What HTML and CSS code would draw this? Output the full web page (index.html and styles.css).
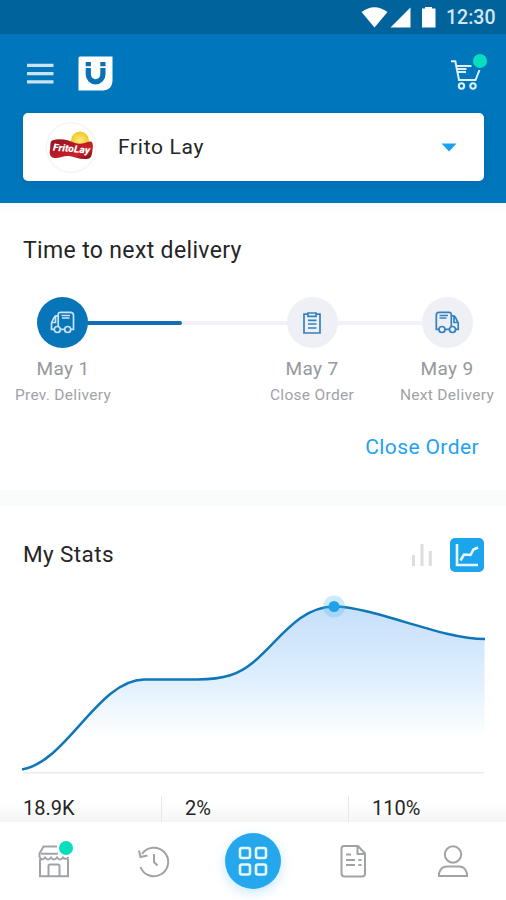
FILE: index.html
```html
<!DOCTYPE html>
<html lang="en">
<head>
<meta charset="utf-8">
<title>Delivery dashboard</title>
<link rel="stylesheet" href="styles.css">
</head>
<body>
<div class="app">
  <div class="statusbar">
    <svg class="status-icons" width="76" height="22" viewBox="361 6 76 22">
      <path d="M361.500 12 Q374.500 2.500 387.500 12 L374.500 27.500Z"/>
      <path d="M410.500 7.500V27.500H390.500Z"/>
      <path d="M425 7h7v1.500h3.500v19h-13.500v-19h3Z"/>
    </svg>
    <span class="clock">12:30</span>
  </div>
  <header class="header">
    <div class="toolbar">
      <svg class="menu" width="27" height="22" viewBox="0 0 27 22"><path d="M0 2.300h26.500M0 10.600h26.500M0 18.800h26.500"/></svg>
      <svg class="logo" width="35" height="35" viewBox="0 0 35 35">
        <path class="logo-bg" d="M2 0.500H34.500V25Q34 34 25 34.500H.500V2Q.500.500 2 .500Z"/>
        <path class="logo-u" d="M10.300 12V18.500A7.300 7.300 0 0 0 24.900 18.500V12M10.300 6v4.300M24.900 6v4.300"/>
      </svg>
      <div class="cart">
        <svg width="40" height="40" viewBox="448 52 40 40">
          <path d="M451 61.300h4.300L459 80h16.500l4-10M457 66h14.500M457.500 69h9M458 72h8"/>
          <circle cx="461.500" cy="86" r="2.700"/><circle cx="473" cy="86" r="2.700"/>
        </svg>
        <i class="dot"></i>
      </div>
    </div>
    <div class="supplier">
      <svg class="brand" width="52" height="52" viewBox="45 120 52 52">
        <defs>
          <linearGradient id="red" x1="0" y1="0" x2="1" y2="1"><stop offset="0" stop-color="#8e1420"/><stop offset=".35" stop-color="#ad1924"/><stop offset=".7" stop-color="#cf202b"/><stop offset="1" stop-color="#6f0c15"/></linearGradient>
          <radialGradient id="sun"><stop offset="0" stop-color="#ffe98a"/><stop offset="1" stop-color="#f1c91f"/></radialGradient>
        </defs>
        <circle class="brand-ring" cx="71" cy="146.500" r="24.700"/>
        <circle cx="80" cy="139.500" r="9" fill="url(#sun)"/>
        <path d="M52 139.500C60 137 68 139 75 142C82 144.500 87 140 91.500 140.500C93.500 143 93 146 92.500 149C92 153 91.500 156.500 89 157.500C81 159.500 75 155.500 69 155C63 154.500 58 158.500 52.500 156.500C49 154.500 49.500 151 50.200 147.500C50.500 144 50 141 52 139.500Z" fill="url(#red)"/>
        <text class="brand-name" x="53" y="151" textLength="37" lengthAdjust="spacingAndGlyphs" transform="rotate(5 71 148)">FritoLay</text>
      </svg>
      <span class="supplier-name">Frito Lay</span>
      <svg class="caret" width="16" height="9" viewBox="0 0 16 9"><path d="M.500.500h15L8 8.500Z"/></svg>
    </div>
  </header>

  <main>
    <section class="delivery">
      <h2 class="title-delivery">Time to next delivery</h2>
      <div class="timeline">
        <div class="track"><div class="progress"></div></div>
        <div class="step step-prev">
          <div class="badge badge-active">
            <svg width="25" height="23" viewBox="0 0 25 23">
              <path d="M8.200 15.500V3.500Q8.200 1.300 10.500 1.300H20.500Q23.500 1.300 23.500 4.300V18.300H20.700M14.700 18.300H10.300M8.200 4.800H6Q4.800 4.800 4.300 6L1.500 12V18.300H4.300M1.500 11.500H5.500V5M11.500 4.500H20M12 7H19.500"/>
              <circle cx="7.300" cy="18.500" r="3"/><circle cx="17.700" cy="18.500" r="3"/>
            </svg>
          </div>
          <div class="date">May 1</div><div class="label">Prev. Delivery</div>
        </div>
        <div class="step step-close">
          <div class="badge">
            <svg width="18" height="22" viewBox="0 0 18 22"><path d="M5 2.200H1V21H17V2.200H13M5 1H13V4.300H5ZM5 8.300H13.500M5 12H13.500M5 16H13.500"/></svg>
          </div>
          <div class="date">May 7</div><div class="label">Close Order</div>
        </div>
        <div class="step step-next">
          <div class="badge">
            <svg width="25" height="23" viewBox="0 0 25 23">
              <path d="M16.300 15.500V3.500Q16.300 1.300 14 1.300H4Q1.300 1.300 1.300 4.300V18.300H4M10 18.300H14.500M16.300 4.800H18.500Q19.700 4.800 20.200 6L23.200 12V18.300H20.700M23.200 11.500H19V5M4.500 4.500H13M4.500 7H11.500"/>
              <circle cx="7" cy="18.500" r="3"/><circle cx="17.500" cy="18.500" r="3"/>
            </svg>
          </div>
          <div class="date">May 9</div><div class="label label-next">Next Delivery</div>
        </div>
      </div>
      <a class="close-link">Close Order</a>
    </section>

    <section class="stats">
      <div class="stats-head">
        <h2 class="title-stats">My Stats</h2>
        <svg class="bars" width="22" height="24" viewBox="0 0 22 24"><path d="M2.500 12V23M11 1V23M19.300 8V23"/></svg>
        <div class="chart-toggle">
          <svg width="34" height="34" viewBox="0 0 34 34"><path d="M7 6V27H28"/><path d="M10.500 22.500L14 16.500L20.500 17L23.500 11.500L28 9.500"/></svg>
        </div>
      </div>
      <svg class="chart" width="462" height="184" viewBox="23 590 462 184">
        <defs><linearGradient id="area" gradientUnits="userSpaceOnUse" x1="0" y1="606" x2="0" y2="738"><stop offset="0" stop-color="#c5dffa"/><stop offset=".5" stop-color="#dcedfd"/><stop offset="1" stop-color="#fff"/></linearGradient></defs>
        <path fill="url(#area)" d="M22 769.500C67 762 98 680 144 679.500H197C225 679.500 239 674 253 662.500C279 641 298 607 334 606.500C375 607 440 639 484.500 639V773H23Z"/>
        <path class="axis" d="M23 772.800H484"/>
        <path class="curve" d="M22 769.500C67 762 98 680 144 679.500H197C225 679.500 239 674 253 662.500C279 641 298 607 334 606.500C375 607 440 639 485 639"/>
        <circle class="halo" cx="334" cy="606.500" r="11"/><circle class="point" cx="334" cy="606.500" r="5.500"/>
      </svg>
      <div class="figures">
        <div class="figure">18.9K</div><div class="figure">2%</div><div class="figure">110%</div>
      </div>
    </section>
  </main>

  <nav class="nav">
    <div class="nav-item">
      <svg width="36" height="40" viewBox="35 841 36 40">
        <path d="M57 846.500H43.500L39.500 853.500V857.500M41 853.700H58M39.500 857Q42 861.500 45 857.500Q48 861.500 51 857.500Q54 861.500 57 857.500Q60 861.500 63 857.500Q66 860.500 68.500 857M40 859V876.300H68V859M48.500 876V866Q48.500 864.500 50 864.500H58Q59.500 864.500 59.500 866V876"/>
      </svg>
      <i class="dot"></i>
    </div>
    <div class="nav-item">
      <svg width="36" height="40" viewBox="135 841 36 40"><path d="M140.500 867A14.300 14.300 0 1 0 142 854M139 850.500L140.500 857L147.500 855.500M154 854V862L157.500 865.500"/></svg>
    </div>
    <div class="home">
      <svg width="32" height="32" viewBox="0 0 32 32"><rect x="3" y="3" width="10" height="10" rx="2"/><rect x="19" y="3" width="10" height="10" rx="2"/><rect x="3" y="19.500" width="10" height="10" rx="2"/><rect x="19" y="19.500" width="10" height="10" rx="2"/></svg>
    </div>
    <div class="nav-item">
      <svg width="36" height="40" viewBox="335 841 36 40"><path d="M344 846H358L365 853.500V873.500Q365 876.500 362 876.500H344.500Q341.500 876.500 341.500 873.500V849Q341.500 846 344 846ZM357.500 846V854H365M346 854.500H351M346 860H355M358.500 860H361.500M346 865H355M358.500 865H361.500"/></svg>
    </div>
    <div class="nav-item">
      <svg width="36" height="40" viewBox="435 841 36 40"><circle cx="453" cy="854.500" r="8.200"/><path d="M439 876H467V873.500Q465 866.500 459.500 866.500H446.500Q441 866.500 439 873.500Z"/></svg>
    </div>
  </nav>
</div>
</body>
</html>
```
FILE: styles.css
```css
* { box-sizing: border-box; }
body { margin: 0; background: #fff; font-family: Roboto, "Liberation Sans", sans-serif; color: #252525; }
svg { display: block; fill: none; flex: none; }
h2 { margin: 0; font-weight: 400; white-space: nowrap; }
.app { width: 506px; height: 900px; overflow: hidden; display: flex; flex-direction: column; }

.statusbar { height: 34px; flex: none; background: #00639b; display: flex; align-items: center; justify-content: flex-end; padding-right: 11px; }
.status-icons { fill: #fff; margin-right: 9px; }
.clock { width: 49px; font-size: 19.500px; font-weight: 500; color: #d3e6f2; letter-spacing: 0; white-space: nowrap; }

.header { height: 169px; flex: none; background: #0077bc; padding: 18px 22px 0 23px; }
.toolbar { height: 61px; display: flex; align-items: flex-start; }
.menu { margin: 11px 0 0 4px; stroke: #cbe2f3; stroke-width: 3.200; }
.logo { margin: 4px 0 0 24px; }
.logo-bg { fill: #fff; }
.logo-u { stroke: #0872b5; stroke-width: 5.200; }
.cart { position: relative; margin-left: auto; margin-right: -4px; stroke: #e0f0fa; stroke-width: 2; }
.dot { position: absolute; width: 14px; height: 14px; border-radius: 50%; background: #06dfbd; }
.cart .dot { left: 25px; top: 2px; }
.supplier { height: 68px; border-radius: 5px; background: #fff; display: flex; align-items: center; padding: 0 27px 0 22px; box-shadow: 0 2px 12px rgba(0, 67, 125, .22); }
.brand-ring { fill: #fff; stroke: #f3f5f6; stroke-width: 1.500; }
.brand-name { font: italic 900 10px Roboto, sans-serif; fill: #fff; }
.supplier-name { margin-left: 21px; font-size: 21px; letter-spacing: .7px; }
.caret { margin-left: auto; fill: #1ba2ee; }

main { flex: 1; min-height: 0; background: #fafbfb; }
.delivery { height: 287px; padding-top: 34px; background: linear-gradient(#f8f9f9, #fff 10px); }
.title-delivery { margin-left: 23px; height: 28px; line-height: 28px; font-size: 23px; letter-spacing: .35px; }
.timeline { position: relative; margin-top: 32px; display: grid; grid-template-columns: 125px 120px 134px 9px 118px; }
.step { position: relative; display: flex; flex-direction: column; align-items: center; white-space: nowrap; }
.step-prev { left: .5px; }
.step-close { grid-column: 3; }
.step-next { grid-column: 5; }
.track { position: absolute; left: 62px; top: 24px; width: 385px; height: 4px; background: #f1f2f7; }
.progress { width: 120px; height: 4px; border-radius: 0 2px 2px 0; background: #116eb5; }
.badge { width: 51px; height: 51px; border-radius: 50%; background: #eff0f5; display: flex; align-items: center; justify-content: center; stroke: #3382bd; stroke-width: 1.700; }
.badge-active { background: #0875b9; stroke: #c9e3f5; margin-left: -2px; }
.date { margin-top: 9px; height: 24px; line-height: 24px; font-size: 19px; letter-spacing: .4px; color: #96989d; }
.label { margin-top: 4px; height: 20px; line-height: 20px; font-size: 15.500px; letter-spacing: .3px; color: #a0a2a7; }
.close-link { display: block; margin: 28px 27px 0 0; text-align: right; line-height: 28px; font-size: 21px; letter-spacing: .4px; color: #23a1f1; }

.stats { height: 316px; margin-top: 16px; background: #fff; padding: 32px 21px 0 23px; }
.stats-head { height: 34px; display: flex; align-items: center; }
.title-stats { font-size: 22.500px; letter-spacing: .4px; line-height: 28px; margin-top: -3px; }
.bars { margin-left: auto; margin-right: 17px; stroke: #dcddde; stroke-width: 3; }
.chart-toggle { width: 34px; height: 34px; margin-right: 1px; border-radius: 5px; background: #1ca4ed; stroke: #e6f7ff; stroke-width: 2.600; }
.chart { margin-top: 18px; overflow: visible; }
.axis { stroke: #e9ebed; stroke-width: 1.500; }
.curve { stroke: #0f76b9; stroke-width: 2.500; }
.halo { fill: #57b9f2; fill-opacity: .3; }
.point { fill: #20a2eb; }
.figures { margin: 22px -21px 0 -23px; height: 26px; display: grid; grid-template-columns: 161px 187px 158px; font-size: 20px; line-height: 24px; background: linear-gradient(#fff 20%, #f5f5f5); }
.figure { padding-left: 23px; }
.figure + .figure { border-left: 1px solid #e7e8e9; }

.nav { height: 78px; flex: none; background: #fff; display: grid; grid-template-columns: repeat(5, 100px); justify-content: center; justify-items: center; align-items: center; }
.nav-item { position: relative; stroke: #a0a3a6; stroke-width: 2; }
.nav-item .dot { left: 24px; top: 0; }
.home { width: 56px; height: 56px; border-radius: 50%; background: #25a7ee; box-shadow: 0 4px 12px rgba(35, 166, 238, .25); display: flex; align-items: center; justify-content: center; stroke: #e6f7ff; stroke-width: 2.600; }
```
